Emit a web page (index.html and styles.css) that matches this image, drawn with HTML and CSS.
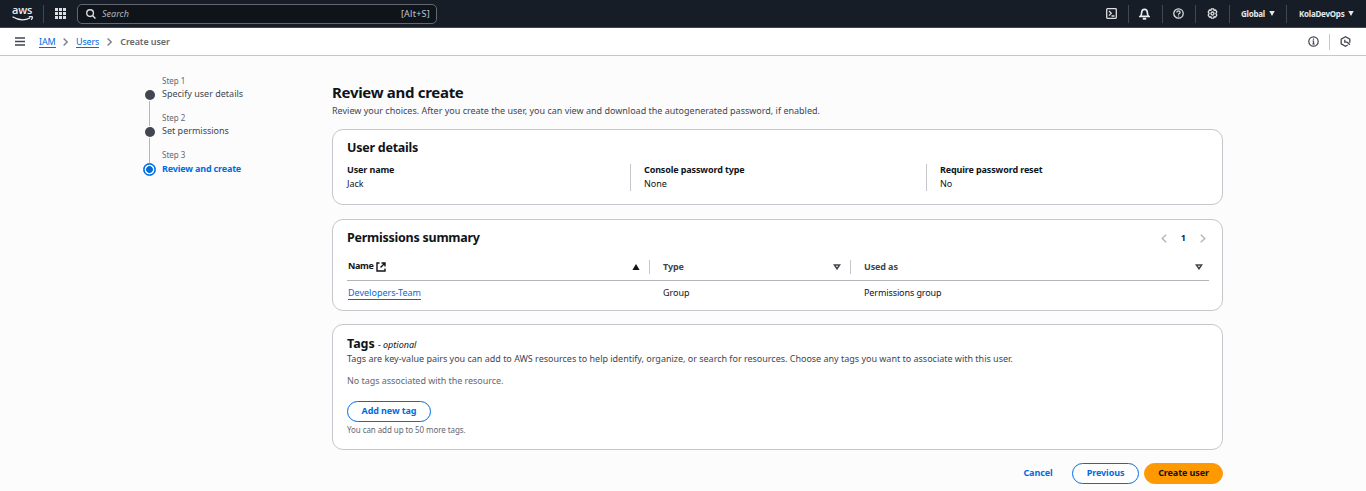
FILE: index.html
```html
<!DOCTYPE html>
<html lang="en">
<head>
<meta charset="utf-8">
<title>Create user | IAM</title>
<link rel="stylesheet" href="styles.css">
</head>
<body>
<header class="topbar">
  <div class="logo"><span class="logo-text">aws</span><svg class="smile" width="22" height="6" viewBox="0 0 22 6"><path d="M.5 .8Q9.500 6.300 18 2M16.800 .9q3.500-.8 3.600.2.1 1.300-1.200 2.600" fill="none" stroke="#e8eaed" stroke-width="1.300"/></svg></div>
  <span class="sep sep-logo"></span>
  <svg class="grid" width="11" height="11" viewBox="0 0 11 11" fill="#dedee3"><path d="M0 0h3v3H0zM4 0h3v3H4zM8 0h3v3H8zM0 4h3v3H0zM4 4h3v3H4zM8 4h3v3H8zM0 8h3v3H0zM4 8h3v3H4zM8 8h3v3H8z"/></svg>
  <div class="search">
    <svg width="10" height="10" viewBox="0 0 11 11" fill="none" stroke="#dedee3" stroke-width="1.500"><circle cx="4.500" cy="4.500" r="3.700"/><path d="M7.100 7.100l3.300 3.300"/></svg>
    <span class="placeholder">Search</span><span class="shortcut">[Alt+S]</span>
  </div>
  <nav class="tools">
    <span class="tool t1"><svg width="11" height="11" viewBox="0 0 11 11" fill="none" stroke="#dedee3" stroke-width="1.300"><rect x=".7" y=".7" width="9.600" height="9.600" rx=".8"/><path d="M3 3l2.300 2.300L3 7.600M5.500 8h3"/></svg></span>
    <span class="tool t2"><svg width="11" height="12" viewBox="0 0 11 12" fill="none" stroke="#ebebf0" stroke-width="1.700"><path d="M1.200 8.400c1.400-1 1.400-2 1.500-4.100C2.800 2.200 4 1.300 5.500 1.300s2.700.9 2.800 3c.1 2.100.1 3.100 1.500 4.100z"/><path d="M3.800 10.700h3.400" stroke-width="2"/></svg></span>
    <span class="tool t3"><svg width="11" height="11" viewBox="0 0 11 11" fill="none" stroke="#dedee3" stroke-width="1.300"><circle cx="5.500" cy="5.500" r="4.700"/><path d="M3.900 4.400c0-2 3.200-1.900 3.200 0 0 1.100-1.600 1-1.600 2.300M5.500 7.400v1.200"/></svg></span>
    <span class="tool t4"><svg width="11" height="11" viewBox="0 0 11 11" fill="none" stroke="#dedee3" stroke-width="1.300"><path d="M4.400.8h2.200l.5 1.400 1.500-.2 1.200 1.900-.9 1.600.9 1.600-1.200 1.900-1.500-.2-.5 1.400H4.400l-.5-1.400-1.500.2-1.200-1.900.9-1.600-.9-1.600 1.200-1.900 1.500.2z"/><circle cx="5.500" cy="5.500" r="1.500"/></svg></span>
    <span class="tool t5"><b>Global</b><svg class="caret" width="6" height="5" viewBox="0 0 6 5"><path d="M.3 0h5.400L3 5z"/></svg></span>
    <span class="tool t6"><b>KolaDevOps</b><svg class="caret" width="6" height="5" viewBox="0 0 6 5"><path d="M.3 0h5.400L3 5z"/></svg></span>
  </nav>
</header>
<div class="crumbbar">
  <svg class="burger" width="10" height="9" viewBox="0 0 10 9" stroke="#424650" stroke-width="1.300"><path d="M0 1h10M0 4.500h10M0 8h10"/></svg>
  <a class="crumb">IAM</a>
  <svg class="chev" width="5" height="8" viewBox="0 0 5 8"><path d="M.6.6L4.200 4 .6 7.400"/></svg>
  <a class="crumb">Users</a>
  <svg class="chev" width="5" height="8" viewBox="0 0 5 8"><path d="M.6.6L4.200 4 .6 7.400"/></svg>
  <span class="current">Create user</span>
  <div class="panels">
    <svg width="11" height="11" viewBox="0 0 11 11" fill="none" stroke="#424650" stroke-width="1.200"><circle cx="5.500" cy="5.500" r="4.700"/><path d="M5.500 2.500v1.200M4.500 5h1v3M4.300 8h2.500"/></svg>
    <span class="panel-sep"></span>
    <svg width="11" height="11" viewBox="0 0 11 11" fill="none" stroke="#424650" stroke-width="1.300"><path d="M9.800 6.800V3.100L5.500.8 1.200 3.100v4.800l4.300 2.300 2.200-1.200M4.800 3.800v2.400h2.500M7.300 6.200l2.500 2.600"/></svg>
  </div>
</div>
<div class="page">
  <ol class="steps">
    <li class="step"><span class="rail"><i class="dot"></i></span><div><small>Step 1</small><span>Specify user details</span></div></li>
    <li class="step"><span class="rail"><i class="dot"></i></span><div><small>Step 2</small><span>Set permissions</span></div></li>
    <li class="step active"><span class="rail"><i class="dot"></i></span><div><small>Step 3</small><span>Review and create</span></div></li>
  </ol>
  <main class="main">
    <h1>Review and create</h1>
    <p class="lead">Review your choices. After you create the user, you can view and download the autogenerated password, if enabled.</p>
    <section class="card details">
      <h2>User details</h2>
      <dl class="cols">
        <div><dt>User name</dt><dd>Jack</dd></div>
        <div><dt>Console password type</dt><dd>None</dd></div>
        <div><dt>Require password reset</dt><dd>No</dd></div>
      </dl>
    </section>
    <section class="card perms">
      <div class="perm-head"><h2>Permissions summary</h2>
        <div class="pager"><svg width="6" height="9" viewBox="0 0 6 9"><path d="M5.200.8L1.200 4.500l4 3.700"/></svg><b>1</b><svg width="6" height="9" viewBox="0 0 6 9"><path d="M.8.8l4 3.700-4 3.700"/></svg></div>
      </div>
      <div class="row thead">
        <div class="th name"><span>Name</span><svg class="ext" width="10" height="10" viewBox="0 0 10 10"><path d="M3.500 1H1v8h8V6.500M5.500 1H9v3.500M9 1L4.500 5.500"/></svg><svg class="sort" width="8" height="6" viewBox="0 0 8 6"><path d="M4 0l3.600 6H.4z" fill="#0f141a"/></svg></div>
        <div class="th"><span>Type</span><svg class="sort" width="8" height="6" viewBox="0 0 8 6"><path d="M1.300.9h5.400L4 4.800z" fill="none" stroke="#424650" stroke-width="1.500"/></svg></div>
        <div class="th"><span>Used as</span><svg class="sort" width="8" height="6" viewBox="0 0 8 6"><path d="M1.300.9h5.400L4 4.800z" fill="none" stroke="#424650" stroke-width="1.500"/></svg></div>
      </div>
      <div class="row tbody"><div><a class="team">Developers-Team</a></div><div>Group</div><div class="pgroup">Permissions group</div></div>
    </section>
    <section class="card tags">
      <h2>Tags <em>- optional</em></h2>
      <p class="desc">Tags are key-value pairs you can add to AWS resources to help identify, organize, or search for resources. Choose any tags you want to associate with this user.</p>
      <p class="none">No tags associated with the resource.</p>
      <button class="btn add">Add new tag</button>
      <p class="limit">You can add up to 50 more tags.</p>
    </section>
    <div class="actions">
      <button class="btn cancel">Cancel</button><button class="btn prev">Previous</button><button class="btn create">Create user</button>
    </div>
  </main>
</div>
</body>
</html>
```

FILE: styles.css
```css
* { box-sizing: border-box; }
body { margin: 0; height: 491px; overflow: hidden; background: #fcfcfd; color: #0f141a; font: 9px/14px "Noto Sans", "Open Sans", sans-serif; }
h1, h2, p, dl, dd, ol { margin: 0; padding: 0; }
span, a, b { white-space: nowrap; }
svg { display: block; flex: none; }
.topbar { height: 28px; display: flex; align-items: center; background: #161d26; border-bottom: 1px solid #424650; padding-left: 12px; color: #e6e8eb; }
.logo { width: 22px; height: 17px; margin-bottom: 3px; display: flex; flex-direction: column; }
.logo-text { font: 600 11px/12px "Open Sans", sans-serif; letter-spacing: -.2px; color: #ebebf0; }
.sep { width: 1px; height: 18px; background: #424650; }
.sep-logo { margin: 0 11px 0 9px; }
.search { width: 360px; height: 20px; margin-left: 11px; border: 1px solid #656871; border-radius: 5px; background: #0f141a; display: flex; align-items: center; padding: 0 6px 0 8px; }
.placeholder { font-style: italic; color: #b4b4bb; margin-left: 6px; }
.shortcut { margin-left: auto; color: #c6c6cd; letter-spacing: .25px; }
.tools { margin-left: auto; display: flex; height: 18px; }
.tool { display: flex; align-items: center; border-left: 1px solid #424650; font-size: 8px; letter-spacing: -.25px; }
.t1 { border: 0; width: 22px; }
.t2 { width: 34px; padding-left: 10px; }
.t3 { width: 33px; padding-left: 10px; }
.t4 { width: 34px; padding-left: 11px; }
.t5 { width: 57px; padding-left: 11px; }
.t6 { width: 80px; padding-left: 12px; }
.caret { margin-left: 4px; fill: #e6e8eb; }
.crumbbar { height: 28px; display: flex; align-items: center; background: #fff; border-bottom: 1px solid #c6c6cd; padding: 0 15px 0 15px; }
.burger { margin-right: 14px; }
.crumb, .team { color: #006ce0; border-bottom: 1px solid #006ce0; line-height: 11px; }
.crumb { letter-spacing: -.15px; }
.chev { margin: 0 8px 0 7.5px; fill: none; stroke: #7d808b; stroke-width: 1.4; }
.current { color: #656871; font-weight: 600; letter-spacing: -.1px; margin-left: .5px; }
.panels { margin-left: auto; display: flex; align-items: center; }
.panel-sep { width: 1px; height: 16px; background: #c6c6cd; margin: 0 10px 0 10px; }
.page { display: flex; }
.steps { list-style: none; width: 189px; margin: 19px 0 0 143px; }
.step { display: flex; height: 37px; color: #424650; }
.rail { width: 13px; margin-right: 6px; display: flex; flex-direction: column; align-items: center; padding-top: 14px; }
.rail::after { content: ""; flex: none; width: 1px; height: 25px; background: #b4b4bb; }
.dot { flex: none; width: 10px; height: 10px; margin: 1px 0; border-radius: 50%; background: #424650; }
.step small { display: block; font-size: 8px; line-height: 12px; color: #656871; }
.step div > span { display: block; line-height: 14px; }
.active { color: #006ce0; font-weight: 700; }
.active small { font-weight: 400; }
.step.active div > span { line-height: 16px; letter-spacing: -.17px; }
.active .rail { padding-top: 13px; }
.active .rail::after { display: none; }
.active .dot { width: 13px; height: 13px; border: 1px solid #006ce0; background: radial-gradient(circle, #006ce0 3px, #fff 3.8px, #fff 4.6px, #006ce0 5.2px); }
.main { width: 891px; }
h1 { font-size: 15px; line-height: 20px; margin-top: 26px; font-weight: 700; letter-spacing: -.3px; }
.lead { color: #424650; margin: 2px 0 11px; }
.card { background: #fff; border: 1px solid #c6c6cd; border-radius: 11px; padding: 0 13px 0 14px; }
h2 { font-size: 12.5px; line-height: 18px; font-weight: 700; letter-spacing: -.25px; }
.details { height: 76px; padding-top: 9px; margin-bottom: 14px; }
.cols { display: grid; grid-template-columns: 283px 296px 1fr; margin-top: 7px; }
.cols > div + div { border-left: 1px solid #c6c6cd; padding-left: 13px; }
.cols > div { height: 27px; }
dt { font-weight: 700; white-space: nowrap; line-height: 12px; letter-spacing: -.13px; }
dd { line-height: 15px; }
.perms { height: 92px; padding-top: 9px; margin-bottom: 13px; }
.perm-head { display: flex; justify-content: space-between; }
.pager { display: flex; align-items: center; gap: 14px; padding-right: 3px; }
.pager svg { fill: none; stroke: #b4b4bb; stroke-width: 1.4; }
.pager b { color: #002b66; }
.row { display: grid; grid-template-columns: 302px 201px 1fr; }
.thead { height: 34px; border-bottom: 1px solid #b4b4bb; align-items: center; padding-top: 6px; }
.th { display: flex; align-items: center; height: 14px; color: #424650; font-weight: 700; padding: 0 6px 0 13px; border-left: 1px solid #c6c6cd; letter-spacing: -.12px; }
.th:nth-child(2) { padding-right: 9px; }
.th.name { border: 0; padding: 0 9px 0 1px; color: #0f141a; letter-spacing: -.35px; }
.name span { line-height: 12px; padding-bottom: 2px; }
.sort { margin-left: auto; }
.ext { margin-left: 2.5px; fill: none; stroke: #0f141a; stroke-width: 1.4; }
.tbody { padding-top: 5px; }
.tbody > div { padding-left: 14px; }
.tbody > div:first-child { padding-left: 1px; }
.tbody .pgroup { letter-spacing: -.1px; }
.tags { height: 126px; padding-top: 10px; }
.tags em { font-size: 9px; font-weight: 400; letter-spacing: 0; }
.tags h2 { letter-spacing: -.05px; }
.desc { color: #424650; margin-top: -2px; letter-spacing: -.012px; }
.none { color: #656871; margin: 8px 0 13px; letter-spacing: -.05px; }
.btn { display: block; height: 21px; border: 1px solid #006ce0; border-radius: 11px; background: #fff; color: #006ce0; padding: 0 0 1px; font: 700 9px/18px "Noto Sans", "Open Sans", sans-serif; letter-spacing: -.1px; }
.add { width: 84px; }
.limit { color: #656871; font-size: 8px; line-height: 14px; margin-top: 1px; letter-spacing: -.08px; }
.actions { display: flex; justify-content: flex-end; padding-top: 13px; }
.cancel { background: none; border-color: transparent; width: 68px; }
.prev { width: 67px; }
.create { width: 79px; margin-left: 5px; background: #ff9900; border-color: #ff9900; color: #0f141a; }
```
